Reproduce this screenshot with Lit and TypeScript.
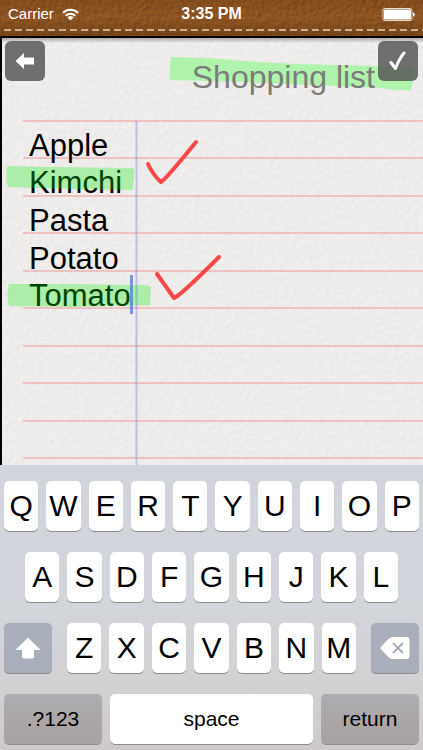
import { LitElement, html, css, svg } from "lit";
import { customElement, state } from "lit/decorators.js";

const RULES = [83, 120, 158, 195, 233, 270, 308, 345, 383, 420];

@customElement("status-bar")
class StatusBar extends LitElement {
  static styles = css`
    :host {
      position: relative;
      display: block;
      height: 36px;
      background: #8a5220;
      border-bottom: 2px solid #000;
      color: #fff;
      overflow: hidden;
    }
    .leather {
      position: absolute;
      inset: 0;
      width: 100%;
      height: 100%;
    }
    .bar {
      position: relative;
      display: grid;
      grid-template-columns: 1fr auto 1fr;
      align-items: center;
      height: 28px;
      padding: 0 8px;
      font-size: 15px;
      line-height: 20px;
    }
    .carrier {
      display: flex;
      align-items: center;
      gap: 8px;
    }
    .time {
      font-size: 16px;
      font-weight: 700;
    }
    .battery {
      justify-self: end;
    }
    svg {
      display: block;
    }
  `;

  render() {
    return html`
      <svg class="leather" aria-hidden="true">
        <defs>
          <filter id="hide" x="0" y="0" width="100%" height="100%" color-interpolation-filters="sRGB">
            <feTurbulence type="fractalNoise" baseFrequency="0.25" numOctaves="3" seed="8" result="n" />
            <feDiffuseLighting in="n" surfaceScale="0.8" diffuseConstant="1.1" lighting-color="#9a5c26">
              <feDistantLight azimuth="225" elevation="58" />
            </feDiffuseLighting>
          </filter>
          <linearGradient id="edge" x1="0" y1="0" x2="0" y2="1">
            <stop offset="0" stop-color="#3a1c00" stop-opacity="0.12" />
            <stop offset="0.5" stop-color="#3a1c00" stop-opacity="0" />
            <stop offset="1" stop-color="#3a1c00" stop-opacity="0.3" />
          </linearGradient>
        </defs>
        <rect width="100%" height="100%" filter="url(#hide)" opacity="0.7" />
        <rect width="100%" height="100%" fill="url(#edge)" />
        <line x1="4" x2="100%" y1="30" y2="30" stroke="#cfae8c" stroke-width="2" stroke-dasharray="7 4" />
      </svg>
      <div class="bar">
        <div class="carrier">
          <span>Carrier</span>
          <svg width="17" height="13" viewBox="0 0 17 13" role="img" aria-label="Wi-Fi">
            <g fill="none" stroke="#fff" stroke-width="2">
              <path d="M1 4.8a10.6 10.6 0 0 1 15 0" />
              <path d="M3.7 7.7a6.8 6.8 0 0 1 9.6 0" />
            </g>
            <path d="M5.4 9.4a4.4 4.4 0 0 1 6.2 0L8.5 12.6z" fill="#fff" />
          </svg>
        </div>
        <span class="time">3:35 PM</span>
        <svg class="battery" width="33" height="13" viewBox="0 0 33 13" role="img" aria-label="Battery full">
          <rect x="1" y="0.5" width="29" height="12" rx="2" fill="none" stroke="#fff" stroke-opacity="0.8" />
          <rect x="2" y="1.5" width="27" height="10" rx="1" fill="#fff" />
          <path d="M31 4.5q2 0.5 2 2t-2 2z" fill="#fff" />
        </svg>
      </div>
    `;
  }
}

@customElement("note-page")
class NotePage extends LitElement {
  @state() items = ["Apple", "Kimchi", "Pasta", "Potato", "Tomato"];

  static styles = css`
    :host {
      position: relative;
      display: block;
      border-left: 2px solid #000;
      background: #efeeec;
      overflow: hidden;
    }
    .layer {
      position: absolute;
      inset: 0;
      width: 100%;
      height: 100%;
      pointer-events: none;
    }
    .marks {
      position: absolute;
      top: 0;
      left: 0;
      pointer-events: none;
    }
    .glow {
      position: absolute;
      top: 12px;
      right: 8px;
      pointer-events: none;
    }
    .head {
      position: relative;
      display: grid;
      grid-template-columns: 40px 1fr 40px;
      align-items: start;
      padding: 3px 5px 0 3px;
      gap: 3px;
    }
    .tool {
      display: grid;
      place-items: center;
      width: 40px;
      height: 40px;
      padding: 0;
      border: 0;
      border-radius: 6px;
      background: rgba(88, 88, 88, 0.85);
    }
    h1 {
      margin: 0;
      padding-top: 18px;
      text-align: right;
      font-size: 32px;
      line-height: 36px;
      font-weight: 400;
      color: #7b7b7b;
    }
    ul {
      position: relative;
      display: grid;
      grid-template-rows: repeat(5, 1fr);
      height: 188px;
      margin: 32px 0 0;
      padding: 0 27px;
      list-style: none;
    }
    li {
      display: flex;
      align-items: center;
      min-height: 0;
    }
    input {
      width: 100%;
      height: 36px;
      padding: 0;
      border: 0;
      outline: 0;
      background: none;
      font: inherit;
      font-size: 31px;
      line-height: 36px;
      color: #000;
    }
    svg {
      display: block;
    }
  `;

  render() {
    return html`
      <svg class="layer" aria-hidden="true">
        <defs>
          <filter id="grain" x="0" y="0" width="100%" height="100%" color-interpolation-filters="sRGB">
            <feTurbulence type="fractalNoise" baseFrequency="0.2" numOctaves="2" seed="4" result="n" />
            <feDiffuseLighting in="n" surfaceScale="0.25" diffuseConstant="1.14" lighting-color="#f0efed">
              <feDistantLight azimuth="235" elevation="60" />
            </feDiffuseLighting>
          </filter>
          <linearGradient id="shade" x1="0" y1="0" x2="0" y2="1">
            <stop offset="0" stop-color="#000" stop-opacity="0.28" />
            <stop offset="1" stop-color="#000" stop-opacity="0" />
          </linearGradient>
        </defs>
        <rect width="100%" height="100%" filter="url(#grain)" opacity="0.4" />
        <rect width="100%" height="5" fill="url(#shade)" />
        ${RULES.map(
          (y) => svg`<line x1="21" x2="100%" y1=${y} y2=${y} stroke="#f09898" stroke-opacity="0.5" stroke-width="2" />`
        )}
        <line x1="134.5" x2="134.5" y1="83" y2="100%" stroke="#8c8cf0" stroke-opacity="0.5" stroke-width="2" />
      </svg>
      <svg class="glow" width="248" height="42" viewBox="0 0 248 42" aria-hidden="true">
        <path d="M4 7L42 8Q80 12 130 14L246 17Q247 28 244 40Q230 41 215 38Q160 36 100 33Q50 31 2 30Z" fill="#aff3ac" />
      </svg>
      <div class="head">
        <button class="tool" aria-label="Back">
          <svg width="20" height="16" viewBox="0 0 20 16"><path d="M0.5 8L9 0V4.5H19V11.5H9V16Z" fill="#fff" /></svg>
        </button>
        <h1>Shopping list</h1>
        <button class="tool" aria-label="Done">
          <svg width="18" height="20" viewBox="0 0 18 20">
            <path d="M2 11.5L6.5 17.5Q10 8 15 2" fill="none" stroke="#fff" stroke-width="3" stroke-linecap="round" stroke-linejoin="round" />
          </svg>
        </button>
      </div>
      <ul>
        ${this.items.map(
          (item, i) => html`<li><input type="text" aria-label="Item ${i + 1}" .value=${item} /></li>`
        )}
      </ul>
      <svg class="marks" width="240" height="290" viewBox="0 0 240 290" aria-hidden="true">
        <g fill="#00f000" fill-opacity="0.28">
          <path d="M5 128L46 129L131 130Q133 131 132 140L131 152L70 151L6 149Q3 138 5 128Z" />
          <path d="M7 246L70 246L130 247Q149 246 149 250L148 267L70 269L7 268Q4 257 7 246Z" />
        </g>
        <g fill="none" stroke="#f94848" stroke-width="4" stroke-linecap="round" stroke-linejoin="round">
          <path d="M146 126Q151 137 159 144Q164 141 194 104" />
          <path d="M155 236L172 260Q178 258 217 219" />
        </g>
        <path d="M129.500 237V276" stroke="#5578dc" stroke-opacity="0.75" stroke-width="3" />
      </svg>
    `;
  }
}

@customElement("key-board")
class KeyBoard extends LitElement {
  static styles = css`
    :host {
      display: grid;
      gap: 21px;
      padding: 16px 4px 6px;
      background: linear-gradient(#d1d5db 0%, #d2d5da 50%, #d2d1d4 75%, #cfcaca 100%);
    }
    .row {
      display: grid;
      grid-auto-flow: column;
      grid-auto-columns: minmax(0, 1fr);
      gap: 8px;
    }
    .middle {
      padding: 0 21px;
    }
    .lower {
      display: grid;
      grid-template-columns: 48px 1fr 48px;
      gap: 15px;
    }
    .bottom {
      display: grid;
      grid-template-columns: 98fr 203fr 98fr;
      gap: 8px;
    }
    button {
      display: grid;
      place-items: center;
      min-width: 0;
      height: 50px;
      padding: 0;
      border: 0;
      border-radius: 5px;
      background: #fff;
      box-shadow: 0 1px 0 #8a8c90;
      font: inherit;
      font-size: 30px;
      line-height: 36px;
      color: #000;
    }
    .dim {
      background: #a9afba;
    }
    .word {
      font-size: 21px;
      line-height: 24px;
    }
    .bottom .dim {
      background: linear-gradient(#adadb1, #aba5a5 60%, #a8a3a3);
    }
    svg {
      display: block;
    }
  `;

  keys(letters: string) {
    return [...letters].map((l) => html`<button>${l}</button>`);
  }

  render() {
    return html`
      <div class="row">${this.keys("QWERTYUIOP")}</div>
      <div class="row middle">${this.keys("ASDFGHJKL")}</div>
      <div class="lower">
        <button class="dim" aria-label="Shift">
          <svg width="26" height="22" viewBox="0 0 26 22">
            <path d="M13 0.500L25.500 13H19V19.500Q19 21.500 17 21.500H9Q7 21.500 7 19.500V13H0.500Z" fill="#fff" />
          </svg>
        </button>
        <div class="row">${this.keys("ZXCVBNM")}</div>
        <button class="dim" aria-label="Delete">
          <svg width="30" height="22" viewBox="0 0 30 22">
            <path d="M1 9.800L9 1.500Q10.500 0 12.500 0H26.500Q29.500 0 29.500 3V19Q29.500 22 26.500 22H12.500Q10.500 22 9 20.500L1 12.200Q0 11 1 9.800Z" fill="#fff" />
            <path d="M13 6L23 16M23 6L13 16" stroke="#a9afba" stroke-width="2" />
          </svg>
        </button>
      </div>
      <div class="bottom">
        <button class="word dim">.?123</button>
        <button class="word">space</button>
        <button class="word dim">return</button>
      </div>
    `;
  }
}

@customElement("app-root")
class AppRoot extends LitElement {
  static styles = css`
    :host {
      display: flex;
      flex-direction: column;
      min-height: 100vh;
      font-family: "Liberation Sans", Arial, sans-serif;
    }
    note-page {
      flex: 1;
    }
  `;

  render() {
    return html`
      <status-bar></status-bar>
      <note-page></note-page>
      <key-board></key-board>
    `;
  }
}
